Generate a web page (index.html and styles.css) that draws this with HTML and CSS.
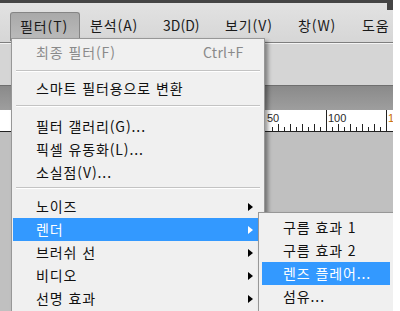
FILE: index.html
```html
<!DOCTYPE html>
<html lang="ko">
<head>
    <meta charset="UTF-8">
    <title>필터 메뉴</title>
    <link rel="stylesheet" href="styles.css">
</head>
<body>
    <div class="app">
        <div class="topline"><span class="corner"></span></div>
        <div class="menubar">
            <span class="mb-item pressed">필터(T)</span>
            <span class="mb-item w73">분석(A)</span>
            <span class="mb-item w62 latin">3D(D)</span>
            <span class="mb-item w73">보기(V)</span>
            <span class="mb-item w64">창(W)</span>
            <span class="mb-item">도움</span>
        </div>
        <div class="toolbar"></div>
        <div class="tabbar"></div>
        <div class="ruler">
            <svg width="400" height="21" viewBox="0 0 400 21">
                <g stroke="#222" stroke-width="1">
                    <line x1="326.5" y1="0" x2="326.5" y2="21"/>
                    <line x1="386.5" y1="0" x2="386.5" y2="21"/>
                    <line x1="272.5" y1="17" x2="272.5" y2="21"/>
                    <line x1="278.5" y1="14" x2="278.5" y2="21"/>
                    <line x1="284.5" y1="17" x2="284.5" y2="21"/>
                    <line x1="290.5" y1="14" x2="290.5" y2="21"/>
                    <line x1="296.5" y1="17" x2="296.5" y2="21"/>
                    <line x1="302.5" y1="14" x2="302.5" y2="21"/>
                    <line x1="308.5" y1="17" x2="308.5" y2="21"/>
                    <line x1="314.5" y1="14" x2="314.5" y2="21"/>
                    <line x1="320.5" y1="17" x2="320.5" y2="21"/>
                    <line x1="332.5" y1="17" x2="332.5" y2="21"/>
                    <line x1="338.5" y1="14" x2="338.5" y2="21"/>
                    <line x1="344.5" y1="17" x2="344.5" y2="21"/>
                    <line x1="350.5" y1="14" x2="350.5" y2="21"/>
                    <line x1="356.5" y1="17" x2="356.5" y2="21"/>
                    <line x1="362.5" y1="14" x2="362.5" y2="21"/>
                    <line x1="368.5" y1="17" x2="368.5" y2="21"/>
                    <line x1="374.5" y1="14" x2="374.5" y2="21"/>
                    <line x1="380.5" y1="17" x2="380.5" y2="21"/>
                </g>
                <text x="267" y="12" class="rnum">50</text>
                <text x="328" y="12" class="rnum">100</text>
                <text x="388" y="12" class="rnum orange">1</text>
            </svg>
        </div>
        <div class="canvas"></div>

        <div class="menu">
            <div class="item disabled"><span>최종 필터(F)</span><span class="key">Ctrl+F</span></div>
            <div class="sep s1"></div>
            <div class="item">스마트 필터용으로 변환</div>
            <div class="sep s2"></div>
            <div class="item">필터 갤러리(G)...</div>
            <div class="item">픽셀 유동화(L)...</div>
            <div class="item">소실점(V)...</div>
            <div class="sep s3"></div>
            <div class="item sub">노이즈</div>
            <div class="item sub active">렌더</div>
            <div class="item sub">브러쉬 선</div>
            <div class="item sub">비디오</div>
            <div class="item sub">선명 효과</div>
        </div>

        <div class="submenu">
            <div class="item">구름 효과 1</div>
            <div class="item">구름 효과 2</div>
            <div class="item active">렌즈 플레어...</div>
            <div class="item">섬유...</div>
        </div>
    </div>
</body>
</html>
```

FILE: styles.css
```css
* {
    box-sizing: border-box;
    margin: 0;
    padding: 0;
}
html, body {
    width: 400px;
    height: 311px;
    overflow: hidden;
    background: #ffffff;
    font-family: "Noto Sans CJK KR", "Noto Sans", sans-serif;
}
.app {
    position: relative;
    width: 393px;
    height: 311px;
    display: flex;
    flex-direction: column;
    overflow: hidden;
}
.topline {
    height: 3px;
    background: #454545;
    position: relative;
}
.corner {
    position: absolute;
    right: 0;
    top: 0;
    width: 6px;
    height: 10px;
    background: #454545;
}
.menubar {
    height: 40px;
    background: linear-gradient(#e2e2e2, #d6d6d6);
    border-bottom: 1px solid #7e7e7e;
    box-shadow: 0 1px 0 #f4f4f4;
    display: flex;
    align-items: flex-end;
    padding-left: 10px;
}
.mb-item {
    flex: none;
    font-size: 14px;
    letter-spacing: 0.9px;
    color: #1a1a1a;
    height: 29px;
    line-height: 27px;
    padding: 0 0 0 10px;
    margin-bottom: 1px;
    white-space: nowrap;
}
.mb-item.pressed {
    width: 70px;
    padding-left: 9px;
    background: linear-gradient(#a9a9a9, #bcbcbc);
    border: 1px solid #858585;
    border-bottom: none;
    border-radius: 3px 3px 0 0;
}
.mb-item.w73 { width: 73px; }
.mb-item.w62 { width: 62px; }
.mb-item.w64 { width: 64px; }
.mb-item.latin { letter-spacing: 0; }
.toolbar {
    height: 41px;
    background: #d5d5d5;
    margin-top: 1px;
}
.tabbar {
    height: 25px;
    background: linear-gradient(#8a8a8a, #9e9e9e);
    border-top: 1px solid #6f6f6f;
}
.ruler {
    height: 22px;
    background: #ffffff;
    border-bottom: 1px solid #222;
}
.ruler svg {
    display: block;
}
.rnum {
    font-family: "Liberation Sans", sans-serif;
    font-size: 11px;
    fill: #2a2a2a;
}
.rnum.orange {
    fill: #c86a00;
}
.canvas {
    flex: 1;
    background: #c0c0c0;
}

/* 드롭다운 메뉴 */
.menu {
    position: absolute;
    left: 11px;
    top: 38px;
    width: 254px;
    height: 290px;
    background: #f0f0f0;
    border: 1px solid #979797;
    padding: 2px 1px;
    box-shadow: 3px 3px 4px rgba(0, 0, 0, 0.4);
}
.item {
    height: 23px;
    line-height: 22px;
    padding-left: 23px;
    padding-right: 20px;
    font-size: 14px;
    letter-spacing: 0.9px;
    color: #111;
    display: flex;
    justify-content: space-between;
    position: relative;
    white-space: nowrap;
}
.item.disabled {
    color: #8a8a8a;
}
.item .key {
    letter-spacing: 0.3px;
    position: absolute;
    left: 190px;
}
.item.active {
    background: #3399ff;
    color: #ffffff;
}
.item.sub::after {
    content: "";
    position: absolute;
    right: 10px;
    top: 8px;
    border-left: 5px solid #000;
    border-top: 4px solid transparent;
    border-bottom: 4px solid transparent;
}
.item.sub.active::after {
    border-left-color: #ffffff;
}
.sep {
    height: 2px;
    background: #c3c3c3;
    border-bottom: 1px solid #ffffff;
    margin-left: 3px;
    margin-right: 3px;
}
.sep.s1 {
    margin-top: 6px;
    margin-bottom: 5px;
}
.sep.s2 {
    margin-top: 5px;
    margin-bottom: 8px;
}
.sep.s3 {
    margin-top: 3px;
    margin-bottom: 6px;
}

/* 하위 메뉴 */
.submenu {
    position: absolute;
    left: 258px;
    top: 212px;
    width: 136px;
    height: 110px;
    background: #f0f0f0;
    border: 1px solid #979797;
    padding: 3px 3px;
    box-shadow: 3px 3px 4px rgba(0, 0, 0, 0.4);
}
.submenu .item {
    padding-left: 21px;
}
```
